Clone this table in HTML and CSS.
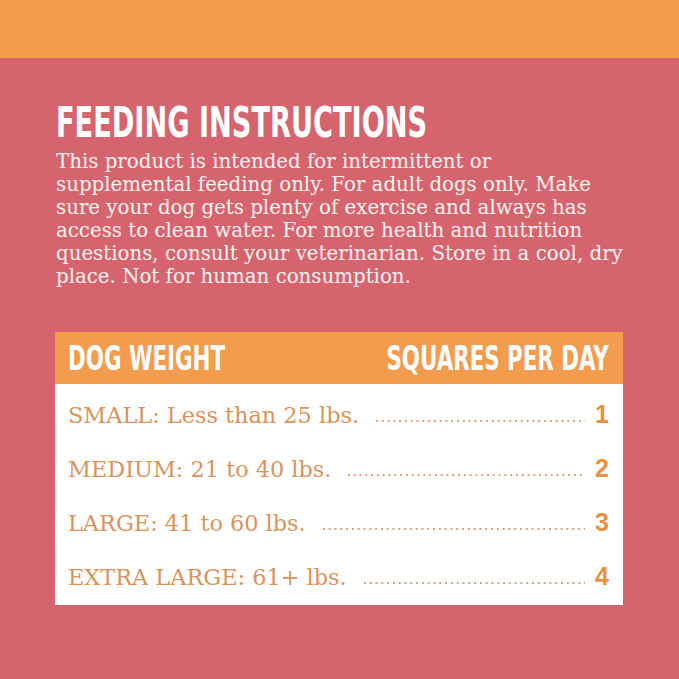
FILE: index.html
```html
<!DOCTYPE html>
<html lang="en">

<head>
    <meta charset="UTF-8">
    <meta name="viewport" content="width=device-width, initial-scale=1.0">
    <title>Feeding Instructions</title>

    <link rel="stylesheet" href="styles.css">
</head>

<body>
    <div class="topbar"></div>

    <div class="content">
        <h1 class="title"><span class="narrow">FEEDING INSTRUCTIONS</span></h1>
        <p class="intro">This product is intended for intermittent or<br>
            supplemental feeding only. For adult dogs only. Make<br>
            sure your dog gets plenty of exercise and always has<br>
            access to clean water. For more health and nutrition<br>
            questions, consult your veterinarian. Store in a cool, dry<br>
            place. Not for human consumption.</p>

        <div class="table">
            <div class="table-head">
                <span class="head-text narrow">DOG WEIGHT</span>
                <span class="head-text narrow right">SQUARES PER DAY</span>
            </div>
            <div class="rows">
                <div class="row">
                    <span class="size">SMALL: Less than 25 lbs.</span>
                    <span class="leader"></span>
                    <span class="num">1</span>
                </div>
                <div class="row">
                    <span class="size">MEDIUM: 21 to 40 lbs.</span>
                    <span class="leader"></span>
                    <span class="num">2</span>
                </div>
                <div class="row">
                    <span class="size">LARGE: 41 to 60 lbs.</span>
                    <span class="leader"></span>
                    <span class="num">3</span>
                </div>
                <div class="row">
                    <span class="size">EXTRA LARGE: 61+ lbs.</span>
                    <span class="leader"></span>
                    <span class="num">4</span>
                </div>
            </div>
        </div>
    </div>
</body>

</html>
```

FILE: styles.css
```css
body {
    margin: 0;
    background-color: #d5646e;
    height: 679px;
    overflow: hidden;
}

.topbar {
    height: 58px;
    background-color: #f39c4d;
}

.content {
    padding: 39px 56px 0 56px;
}

/* condensed display type: squeeze the widest installed condensed face */
.narrow {
    display: inline-block;
    transform: scaleX(0.72);
    transform-origin: left center;
}

.narrow.right {
    transform-origin: right center;
}

.title {
    margin: 0 0 3px 0;
    color: white;
    font-family: "DejaVu Sans Condensed", "DejaVu Sans", sans-serif;
    font-weight: bold;
    font-size: 43px;
    line-height: 50px;
    white-space: nowrap;
}

.title .narrow {
    transform: scaleX(0.703);
}

.intro {
    margin: 0;
    color: #fff3f1;
    font-family: "DejaVu Serif", serif;
    font-size: 19.8px;
    line-height: 23px;
    white-space: nowrap;
}

.table {
    margin: 44px 0 0 -1px;
    width: 568px;
    background-color: white;
}

.table-head {
    display: flex;
    justify-content: space-between;
    align-items: center;
    height: 52px;
    padding: 0 14px 0 13px;
    background-color: #f39c4d;
}

.head-text {
    color: white;
    font-family: "DejaVu Sans Condensed", "DejaVu Sans", sans-serif;
    font-weight: bold;
    font-size: 33px;
    white-space: nowrap;
}

.rows {
    padding: 3px 0 2px 0;
}

.row {
    display: flex;
    align-items: baseline;
    height: 54px;
    padding: 0 14px 0 13px;
    line-height: 54px;
}

.size {
    color: #d9935c;
    font-family: "DejaVu Serif", serif;
    font-size: 22.4px;
}

.leader {
    flex: 1;
    height: 4px;
    margin: 0 10px 0 15px;
    background-image: radial-gradient(circle, #dea27a 1.1px, transparent 1.5px);
    background-size: 5.8px 4px;
    background-repeat: repeat-x;
}

.num {
    color: #e9913f;
    font-family: "Liberation Sans", sans-serif;
    font-weight: bold;
    font-size: 25px;
}
```
